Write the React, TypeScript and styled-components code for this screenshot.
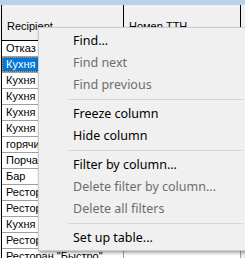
import React from "react";
import styled, {createGlobalStyle} from "styled-components";

const GlobalStyle = createGlobalStyle`
    html, body {
        margin: 0;
        padding: 0;
        width: 245px;
        height: 258px;
        overflow: hidden;
        background: #f0f0f0;
    }
`

const Screen = styled.div`
    position: relative;
    width: 245px;
    height: 258px;
    overflow: hidden;
    background: #f0f0f0;
`

const TitleStrip = styled.div`
    height: 5px;
    background: #b9d1ea;
`

const Grid = styled.div`
    margin-left: 1px;
    border-left: 1px solid #000;
`

const HeaderRow = styled.div`
    display: flex;
    height: 35px;
    border-bottom: 1px solid #000;
    background: #f0f0f0;
`

const HeaderCell = styled.div<{ w: number }>`
    width: ${props => props.w}px;
    flex: none;
    box-sizing: border-box;
    border-right: 1px solid #000;
    padding: 15px 0 0 5px;
    font: 11px "Liberation Sans", Arial, sans-serif;
    color: #000;
    white-space: nowrap;
    overflow: hidden;
`

const Row = styled.div`
    display: flex;
    height: 16px;
    box-sizing: border-box;
    border-bottom: 1px solid #a0a0a0;
`

const Cell = styled.div<{ w: number; selected?: boolean }>`
    width: ${props => props.w}px;
    flex: none;
    box-sizing: border-box;
    border-right: 1px solid #a0a0a0;
    background: ${props => props.selected ? "#0078d7" : "#fff"};
    color: ${props => props.selected ? "#fff" : "#000"};
    outline: ${props => props.selected ? "1px dotted #ff8728" : "none"};
    outline-offset: -1px;
    padding: 1px 0 0 4px;
    font: 11px/13px "Liberation Sans", Arial, sans-serif;
    white-space: nowrap;
    overflow: hidden;
`

const Menu = styled.div`
    position: absolute;
    left: 38px;
    top: 27px;
    width: 210px;
    box-sizing: border-box;
    padding: 2px 0 1px;
    background: #f0f0f0;
    border: 1px solid #cccccc;
    box-shadow: 1px 2px 3px rgba(0, 0, 0, 0.35);
`

const MenuItem = styled.div<{ disabled?: boolean }>`
    height: 22px;
    padding-left: 34px;
    font: 12.5px/22px "Noto Sans", "Open Sans", sans-serif;
    color: ${props => props.disabled ? "#6d6d6d" : "#000"};
    white-space: nowrap;
`

const Separator = styled.div`
    height: 1px;
    margin: 3px 4px 3px 29px;
    background: #d7d7d7;
`

const rows = [
    "Отказ", "Кухня", "Кухня", "Кухня", "Кухня", "Кухня", "горячи",
    "Порча", "Бар", "Ресторан", "Ресторан", "Кухня", "Ресторан", "Ресторан \"Быстро\"",
]

type Entry = { label: string; disabled?: boolean } | "sep";

const menu: Entry[] = [
    {label: "Find..."},
    {label: "Find next", disabled: true},
    {label: "Find previous", disabled: true},
    "sep",
    {label: "Freeze column"},
    {label: "Hide column"},
    "sep",
    {label: "Filter by column..."},
    {label: "Delete filter by column...", disabled: true},
    {label: "Delete all filters", disabled: true},
    "sep",
    {label: "Set up table..."},
]

const App = () => {
    return (
        <Screen>
            <GlobalStyle/>
            <TitleStrip/>
            <Grid>
                <HeaderRow>
                    <HeaderCell w={122}>Recipient</HeaderCell>
                    <HeaderCell w={117}>Номер ТТН</HeaderCell>
                </HeaderRow>
                {rows.map((text, i) => (
                    <Row key={i}>
                        <Cell w={122} selected={i === 1}>{text}</Cell>
                        <Cell w={117}/>
                    </Row>
                ))}
            </Grid>
            <Menu>
                {menu.map((m, i) => m === "sep"
                    ? <Separator key={i}/>
                    : <MenuItem key={i} disabled={m.disabled}>{m.label}</MenuItem>
                )}
            </Menu>
        </Screen>
    )
}

export default App;
